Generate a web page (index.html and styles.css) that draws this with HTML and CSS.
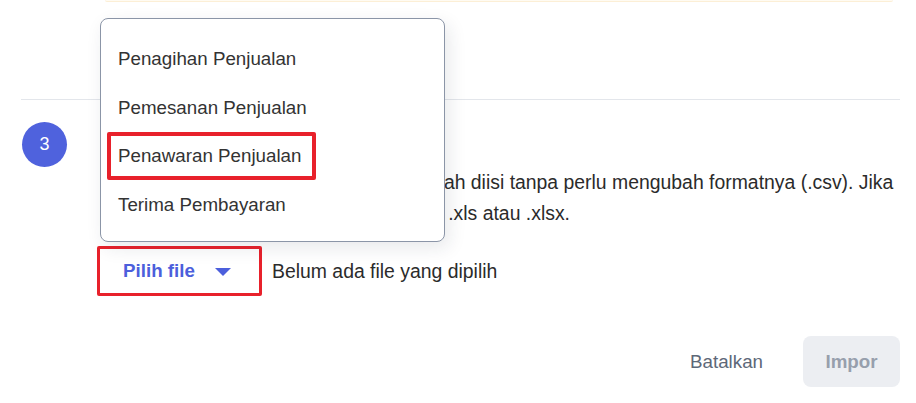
FILE: index.html
```html
<!DOCTYPE html>
<html lang="id">
<head>
<meta charset="utf-8">
<title>Impor Penawaran Penjualan</title>
<link rel="stylesheet" href="styles.css">
</head>
<body>
<div class="page">
  <div class="notice"></div>
  <div class="divider"></div>

  <div class="step">
    <div class="step-num">3</div>
    <div class="step-body">
      <div class="step-title">Unggah file</div>
      <p class="step-desc">Unggah file template Pesanan yang sudah diisi tanpa perlu mengubah formatnya (.csv). Jika<br>perlu, Anda juga dapat mengunggah file .xls atau .xlsx.</p>
      <div class="file-row">
        <button class="pick-btn" type="button">
          <span>Pilih file</span>
          <svg class="caret" width="16" height="8" viewBox="0 0 16 8"><polygon points="0,0 16,0 8,8" fill="currentColor"/></svg>
        </button>
        <span class="file-status">Belum ada file yang dipilih</span>
      </div>
    </div>
  </div>

  <div class="footer">
    <button class="btn-cancel" type="button">Batalkan</button>
    <button class="btn-import" type="button" disabled>Impor</button>
  </div>

  <ul class="menu">
    <li class="menu-item">Penagihan Penjualan</li>
    <li class="menu-item">Pemesanan Penjualan</li>
    <li class="menu-item is-marked">Penawaran Penjualan</li>
    <li class="menu-item">Terima Pembayaran</li>
  </ul>
</div>
</body>
</html>
```
FILE: styles.css
```css
*, *::before, *::after { box-sizing: border-box; }

html, body {
  margin: 0;
  padding: 0;
  background: #ffffff;
}

body {
  width: 916px;
  height: 403px;
  overflow: hidden;
  font-family: "Liberation Sans", Arial, sans-serif;
  font-size: 18.75px;
  color: #2b2b2b;
}

.page {
  position: relative;
  padding: 0 16px 0 21px;
}

.notice {
  margin: 0 7px 0 84px;
  height: 2px;
  background: #fffbf2;
  border-bottom: 1px solid #fcefd6;
  border-radius: 0 0 6px 6px;
}

.divider {
  margin-top: 97px;
  height: 1px;
  background: #e3e6eb;
}

.step {
  display: flex;
  gap: 33px;
  padding: 22px 0 0 1px;
}

.step-num {
  flex: none;
  width: 45px;
  height: 45px;
  border-radius: 50%;
  background: #4f62dd;
  color: #ffffff;
  font-size: 18px;
  display: flex;
  align-items: center;
  justify-content: center;
}

.step-body {
  display: flex;
  flex-direction: column;
}

.step-title {
  height: 45px;
  line-height: 45px;
  font-weight: bold;
}

.step-desc {
  margin: 0;
  font-size: 19.4px;
  line-height: 31px;
  white-space: nowrap;
}

.file-row {
  margin: 17px 0 0 -3px;
  display: flex;
  align-items: center;
  gap: 10px;
}

.pick-btn {
  display: flex;
  align-items: center;
  gap: 20px;
  width: 165px;
  height: 50px;
  padding: 0 0 0 23px;
  border: 3px solid #e8212b;
  border-radius: 2px;
  background: #ffffff;
  color: #4c5fdc;
  font: bold 18.75px "Liberation Sans", Arial, sans-serif;
  cursor: pointer;
}

.caret { display: block; color: #4c5fdc; margin-top: 1px; }

.file-status {
  color: #2b2b2b;
  font-size: 19.4px;
}

.footer {
  margin-top: 40px;
  display: flex;
  justify-content: flex-end;
  align-items: center;
  gap: 19px;
}

.btn-cancel {
  border: none;
  background: transparent;
  padding: 0 21px 0 20px;
  height: 51px;
  color: #5d6878;
  font: 18.75px "Liberation Sans", Arial, sans-serif;
}

.btn-import {
  width: 97px;
  height: 51px;
  border: none;
  border-radius: 8px;
  background: #eceef2;
  color: #979fad;
  font: bold 18.75px "Liberation Sans", Arial, sans-serif;
}

.menu {
  position: absolute;
  left: 100px;
  top: 18px;
  width: 345px;
  height: 224px;
  margin: 0;
  padding: 16px 0 0;
  list-style: none;
  background: #ffffff;
  border: 1px solid #8b95a7;
  border-radius: 8px;
  box-shadow: 4px 6px 18px rgba(30, 40, 60, 0.10);
}

.menu-item {
  position: relative;
  height: 48.7px;
  line-height: 48.7px;
  padding-left: 17px;
  color: #333333;
}

.menu-item.is-marked::after {
  content: "";
  position: absolute;
  left: 6px;
  top: 0;
  width: 209px;
  height: 48px;
  border: 4px solid #e8212b;
  border-radius: 2px;
}
```
